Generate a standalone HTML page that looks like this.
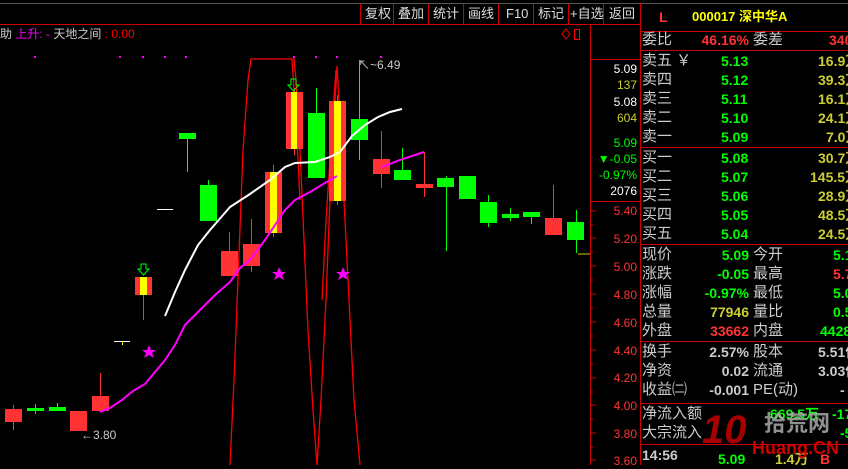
<!DOCTYPE html>
<html><head><meta charset="utf-8"><style>
body{margin:0;width:848px;height:465px;background:#000;overflow:hidden;font-family:"Liberation Sans","Noto Sans CJK SC",sans-serif;position:relative}
.t{position:absolute;white-space:nowrap;font-size:14px;line-height:16px}
.r{text-align:right}
</style></head><body>
<svg width="848" height="465" style="position:absolute;left:0;top:0" font-family="Liberation Sans, Noto Sans CJK SC, sans-serif">
<!-- frame lines -->
<line x1="0" y1="3.5" x2="848" y2="3.5" stroke="#555"/>
<line x1="0" y1="24.5" x2="640" y2="24.5" stroke="#c00"/>
<line x1="590.5" y1="24" x2="590.5" y2="465" stroke="#c00"/>
<line x1="640.5" y1="3" x2="640.5" y2="465" stroke="#c00"/>
<line x1="590" y1="59.5" x2="640" y2="59.5" stroke="#c00"/>
<line x1="590" y1="201.5" x2="640" y2="201.5" stroke="#c00"/>
<g stroke="#c00">
<line x1="360.5" y1="4" x2="360.5" y2="24"/><line x1="393.5" y1="4" x2="393.5" y2="24"/><line x1="428.5" y1="4" x2="428.5" y2="24"/><line x1="463.5" y1="4" x2="463.5" y2="24"/><line x1="498.5" y1="4" x2="498.5" y2="24"/><line x1="533.5" y1="4" x2="533.5" y2="24"/><line x1="568.5" y1="4" x2="568.5" y2="24"/><line x1="603.5" y1="4" x2="603.5" y2="24"/>
</g>
<g stroke="#c00">
<line x1="641" y1="31.5" x2="848" y2="31.5"/><line x1="641" y1="50.5" x2="848" y2="50.5"/><line x1="641" y1="147.5" x2="848" y2="147.5"/><line x1="641" y1="244.5" x2="848" y2="244.5"/><line x1="641" y1="341.5" x2="848" y2="341.5"/><line x1="641" y1="403.5" x2="848" y2="403.5"/><line x1="641" y1="444.5" x2="848" y2="444.5"/>
</g>
<!-- axis ticks -->
<g stroke="#c00">
<line x1="590" y1="211" x2="596" y2="211"/><line x1="590" y1="238" x2="596" y2="238"/><line x1="590" y1="266" x2="596" y2="266"/><line x1="590" y1="294" x2="596" y2="294"/><line x1="590" y1="322" x2="596" y2="322"/><line x1="590" y1="350" x2="596" y2="350"/><line x1="590" y1="378" x2="596" y2="378"/><line x1="590" y1="405" x2="596" y2="405"/><line x1="590" y1="433" x2="596" y2="433"/><line x1="590" y1="460" x2="596" y2="460"/>
<line x1="590" y1="225" x2="593" y2="225"/><line x1="590" y1="252" x2="593" y2="252"/><line x1="590" y1="280" x2="593" y2="280"/><line x1="590" y1="308" x2="593" y2="308"/><line x1="590" y1="336" x2="593" y2="336"/><line x1="590" y1="364" x2="593" y2="364"/><line x1="590" y1="392" x2="593" y2="392"/><line x1="590" y1="419" x2="593" y2="419"/><line x1="590" y1="447" x2="593" y2="447"/>
</g>
<line x1="578" y1="254" x2="590" y2="254" stroke="#cc0"/>
<!-- red envelopes -->
<g fill="none" stroke="#f00" stroke-width="1.3">
<polyline points="230,465 234,380 238,280 243,150 248,80 251,59 294,59 296,80 300,150 304,240 308,330 313,410 317,465"/>
<polyline points="292,59 296,120 300,200"/>
<polyline points="317,465 321,400 326,300 330,200 334,120 337,66 340,120 344,200 349,300 354,400 360,465"/>
<polyline points="322,300 326,220 330,160 333,110 336,70"/>
</g>
<!-- magenta dots -->
<g fill="#f0f"><rect x="34" y="56" width="2" height="2"/><rect x="119" y="56" width="2" height="2"/><rect x="142" y="56" width="2" height="2"/><rect x="164" y="56" width="2" height="2"/><rect x="185" y="56" width="2" height="2"/><rect x="293" y="56" width="2" height="2"/><rect x="315" y="56" width="2" height="2"/><rect x="336" y="56" width="2" height="2"/><rect x="380" y="56" width="2" height="2"/></g>
<!-- wicks -->
<g stroke-width="1">
<g stroke="#f33"><line x1="13.5" y1="405" x2="13.5" y2="430"/><line x1="100.5" y1="373" x2="100.5" y2="411"/><line x1="143.5" y1="277" x2="143.5" y2="320"/><line x1="229.5" y1="232" x2="229.5" y2="276"/><line x1="251.5" y1="219" x2="251.5" y2="272"/><line x1="273.5" y1="165" x2="273.5" y2="237"/><line x1="294.5" y1="88" x2="294.5" y2="155"/><line x1="337.5" y1="95" x2="337.5" y2="205"/><line x1="381.5" y1="131" x2="381.5" y2="188"/><line x1="424.5" y1="180" x2="424.5" y2="197"/><line x1="553.5" y1="185" x2="553.5" y2="235"/></g>
<g stroke="#0f0"><line x1="35.5" y1="404" x2="35.5" y2="414"/><line x1="57.5" y1="403" x2="57.5" y2="411"/><line x1="187.5" y1="133" x2="187.5" y2="172"/><line x1="208.5" y1="180" x2="208.5" y2="221"/><line x1="316.5" y1="88" x2="316.5" y2="178"/><line x1="359.5" y1="60" x2="359.5" y2="160"/><line x1="402.5" y1="148" x2="402.5" y2="180"/><line x1="446.5" y1="176" x2="446.5" y2="251"/><line x1="488.5" y1="195" x2="488.5" y2="227"/><line x1="510.5" y1="208" x2="510.5" y2="221"/><line x1="531.5" y1="212" x2="531.5" y2="224"/><line x1="576.5" y1="210" x2="576.5" y2="253"/></g>
</g>
<!-- bodies -->
<g fill="#f33">
<rect x="5" y="409" width="17" height="13"/><rect x="70" y="411" width="17" height="20"/><rect x="92" y="396" width="17" height="15"/><rect x="135" y="277" width="17" height="18"/><rect x="221" y="251" width="17" height="25"/><rect x="243" y="244" width="17" height="22"/><rect x="265" y="172" width="17" height="61"/><rect x="286" y="92" width="17" height="57"/><rect x="329" y="101" width="17" height="100"/><rect x="373" y="159" width="17" height="15"/><rect x="416" y="184" width="17" height="4"/><rect x="545" y="218" width="17" height="17"/>
</g>
<g fill="#ff0"><rect x="140" y="277" width="7" height="18"/><rect x="270" y="172" width="7" height="61"/><rect x="291" y="92" width="6" height="57"/><rect x="334" y="101" width="7" height="100"/></g>
<g fill="#0f0">
<rect x="27" y="408" width="17" height="3"/><rect x="49" y="407" width="17" height="4"/><rect x="179" y="133" width="17" height="6"/><rect x="200" y="185" width="17" height="36"/><rect x="308" y="113" width="17" height="65"/><rect x="351" y="119" width="17" height="21"/><rect x="394" y="170" width="17" height="10"/><rect x="437" y="178" width="17" height="9"/><rect x="459" y="176" width="17" height="23"/><rect x="480" y="202" width="17" height="21"/><rect x="502" y="214" width="17" height="4"/><rect x="523" y="212" width="17" height="5"/><rect x="567" y="222" width="17" height="18"/>
</g>
<line x1="114" y1="341.5" x2="130" y2="341.5" stroke="#fff"/><line x1="122.5" y1="341" x2="122.5" y2="345" stroke="#ff0"/>
<line x1="157" y1="209.5" x2="173" y2="209.5" stroke="#fff"/>
<!-- MAs -->
<polyline fill="none" stroke="#fff" stroke-width="2" points="165,316 175,292 185,270 198,245 210,230 230,207 250,194 270,180 285,167 295,163 315,162 330,157 340,152 352,136 365,125 378,117 390,112 402,109"/>
<polyline fill="none" stroke="#f0f" stroke-width="2" points="100,412 110,408 122,400 133,391 145,384 155,372 165,360 175,345 185,325 200,310 215,295 230,282 240,268 250,260 265,240 285,210 295,200 310,192 325,183 337,176"/>
<polyline fill="none" stroke="#f0f" stroke-width="2" points="382,167 400,160 412,156 424,152"/>
<line x1="424.5" y1="152" x2="424.5" y2="197" stroke="#f33"/>
<!-- stars -->
<g fill="#f0f"><polygon points="149,345 151,350 156,350 152,353 154,358 149,355 144,358 146,353 142,350 147,350"/><polygon points="279,267 281,272 286,272 282,275 284,280 279,277 274,280 276,275 272,272 277,272"/><polygon points="343,267 345,272 350,272 346,275 348,280 343,277 338,280 340,275 336,272 341,272"/></g>
<!-- arrows -->
<g fill="none" stroke="#0f0"><polygon points="141,264 146,264 146,269 149,269 143.5,275 138,269 141,269"/><polygon points="291,79 296,79 296,85 299,85 293.5,91 288,85 291,85"/></g>
<text x="81" y="439" fill="#ccc" font-size="12">←3.80</text>
<text x="358" y="69" fill="#ccc" font-size="12">↖~6.49</text>
<!-- diamond and square -->
<polygon points="566,29 570,34 566,39 562,34" fill="none" stroke="#f00"/>
<rect x="574.5" y="29.5" width="5" height="10" fill="none" stroke="#f00"/>
</svg>
<!-- toolbar -->
<div class="t" style="top:6px;left:365px;color:#ddd;font-size:13px">复权</div>
<div class="t" style="top:6px;left:398px;color:#ddd;font-size:13px">叠加</div>
<div class="t" style="top:6px;left:433px;color:#ddd;font-size:13px">统计</div>
<div class="t" style="top:6px;left:468px;color:#ddd;font-size:13px">画线</div>
<div class="t" style="top:6px;left:506px;color:#ddd;font-size:13px">F10</div>
<div class="t" style="top:6px;left:538px;color:#ddd;font-size:13px">标记</div>
<div class="t" style="top:6px;left:570px;color:#ddd;font-size:13px">+自选</div>
<div class="t" style="top:6px;left:609px;color:#ddd;font-size:13px">返回</div>
<div class="t" style="top:26px;left:0;font-size:12px;color:#ccc">助 <span style="color:#f0f">上升</span><span style="color:#f0f">: -</span> 天地之间 <span style="color:#f00">: 0.00</span></div>
<!-- axis labels -->
<div style="position:absolute;left:592px;width:45px;top:0;font-size:12px;line-height:14px;text-align:right">
<div class="t r" style="top:61px;right:0;color:#fff;font-size:12px">5.09</div>
<div class="t r" style="top:77px;right:0;color:#cc3;font-size:12px">137</div>
<div class="t r" style="top:94px;right:0;color:#fff;font-size:12px">5.08</div>
<div class="t r" style="top:110px;right:0;color:#cc3;font-size:12px">604</div>
<div class="t r" style="top:135px;right:0;color:#0f0;font-size:12px">5.09</div>
<div class="t r" style="top:151px;right:0;color:#0f0;font-size:12px">▼-0.05</div>
<div class="t r" style="top:167px;right:0;color:#0f0;font-size:12px">-0.97%</div>
<div class="t r" style="top:183px;right:0;color:#fff;font-size:12px">2076</div>
<div class="t r" style="top:203px;right:0;color:#f33;font-size:12px">5.40</div>
<div class="t r" style="top:231px;right:0;color:#f33;font-size:12px">5.20</div>
<div class="t r" style="top:259px;right:0;color:#f33;font-size:12px">5.00</div>
<div class="t r" style="top:287px;right:0;color:#f33;font-size:12px">4.80</div>
<div class="t r" style="top:315px;right:0;color:#f33;font-size:12px">4.60</div>
<div class="t r" style="top:343px;right:0;color:#f33;font-size:12px">4.40</div>
<div class="t r" style="top:370px;right:0;color:#f33;font-size:12px">4.20</div>
<div class="t r" style="top:398px;right:0;color:#f33;font-size:12px">4.00</div>
<div class="t r" style="top:426px;right:0;color:#f33;font-size:12px">3.80</div>
<div class="t r" style="top:453px;right:0;color:#f33;font-size:12px">3.60</div>
</div>
<!-- right panel -->
<div class="t" style="top:9px;left:659px;color:#f33;font-weight:bold">L</div>
<div class="t" style="top:9px;left:692px;color:#ff0;font-weight:bold;font-size:13px">000017 深中华A</div>
<div class="t" style="top:32px;left:642px;color:#ccc;font-size:15px">委比</div>
<div class="t r" style="top:32px;right:99px;color:#f33;font-weight:bold">46.16%</div>
<div class="t" style="top:32px;left:753px;color:#ccc;font-size:15px">委差</div>
<div class="t" style="top:32px;left:829px;color:#f33;font-weight:bold">340</div>
<div id="ob"></div>
<div style="position:absolute;left:0;top:0;color:#ccc">
<div class="t" style="top:53px;left:642px;color:#ccc;font-size:15px">卖五 ￥</div>
<div class="t" style="top:72px;left:642px;color:#ccc;font-size:15px">卖四</div>
<div class="t" style="top:91px;left:642px;color:#ccc;font-size:15px">卖三</div>
<div class="t" style="top:110px;left:642px;color:#ccc;font-size:15px">卖二</div>
<div class="t" style="top:129px;left:642px;color:#ccc;font-size:15px">卖一</div>
<div class="t" style="top:150px;left:642px;color:#ccc;font-size:15px">买一</div>
<div class="t" style="top:169px;left:642px;color:#ccc;font-size:15px">买二</div>
<div class="t" style="top:188px;left:642px;color:#ccc;font-size:15px">买三</div>
<div class="t" style="top:207px;left:642px;color:#ccc;font-size:15px">买四</div>
<div class="t" style="top:226px;left:642px;color:#ccc;font-size:15px">买五</div>
</div>
<div class="t" style="top:53px;left:721px;color:#0f0;font-weight:bold">5.13</div>
<div class="t" style="top:72px;left:721px;color:#0f0;font-weight:bold">5.12</div>
<div class="t" style="top:91px;left:721px;color:#0f0;font-weight:bold">5.11</div>
<div class="t" style="top:110px;left:721px;color:#0f0;font-weight:bold">5.10</div>
<div class="t" style="top:129px;left:721px;color:#0f0;font-weight:bold">5.09</div>
<div class="t" style="top:150px;left:721px;color:#0f0;font-weight:bold">5.08</div>
<div class="t" style="top:169px;left:721px;color:#0f0;font-weight:bold">5.07</div>
<div class="t" style="top:188px;left:721px;color:#0f0;font-weight:bold">5.06</div>
<div class="t" style="top:207px;left:721px;color:#0f0;font-weight:bold">5.05</div>
<div class="t" style="top:226px;left:721px;color:#0f0;font-weight:bold">5.04</div>
<div class="t" style="top:53px;left:818px;color:#cc3;font-weight:bold">16.9万</div>
<div class="t" style="top:72px;left:818px;color:#cc3;font-weight:bold">39.3万</div>
<div class="t" style="top:91px;left:818px;color:#cc3;font-weight:bold">16.1万</div>
<div class="t" style="top:110px;left:818px;color:#cc3;font-weight:bold">24.1万</div>
<div class="t" style="top:129px;left:826px;color:#cc3;font-weight:bold">7.0万</div>
<div class="t" style="top:150px;left:818px;color:#cc3;font-weight:bold">30.7万</div>
<div class="t" style="top:169px;left:810px;color:#cc3;font-weight:bold">145.5万</div>
<div class="t" style="top:188px;left:818px;color:#cc3;font-weight:bold">28.9万</div>
<div class="t" style="top:207px;left:818px;color:#cc3;font-weight:bold">48.5万</div>
<div class="t" style="top:226px;left:818px;color:#cc3;font-weight:bold">24.5万</div>
<!-- quote block -->
<div class="t" style="top:247px;left:642px;color:#ccc;font-size:15px">现价</div>
<div class="t" style="top:266px;left:642px;color:#ccc;font-size:15px">涨跌</div>
<div class="t" style="top:285px;left:642px;color:#ccc;font-size:15px">涨幅</div>
<div class="t" style="top:304px;left:642px;color:#ccc;font-size:15px">总量</div>
<div class="t" style="top:323px;left:642px;color:#ccc;font-size:15px">外盘</div>
<div class="t r" style="top:247px;right:99px;color:#0f0;font-weight:bold">5.09</div>
<div class="t r" style="top:266px;right:99px;color:#0f0;font-weight:bold">-0.05</div>
<div class="t r" style="top:285px;right:99px;color:#0f0;font-weight:bold">-0.97%</div>
<div class="t r" style="top:304px;right:99px;color:#cc3;font-weight:bold">77946</div>
<div class="t r" style="top:323px;right:99px;color:#f33;font-weight:bold">33662</div>
<div class="t" style="top:247px;left:753px;color:#ccc;font-size:15px">今开</div>
<div class="t" style="top:266px;left:753px;color:#ccc;font-size:15px">最高</div>
<div class="t" style="top:285px;left:753px;color:#ccc;font-size:15px">最低</div>
<div class="t" style="top:304px;left:753px;color:#ccc;font-size:15px">量比</div>
<div class="t" style="top:323px;left:753px;color:#ccc;font-size:15px">内盘</div>
<div class="t" style="top:247px;left:833px;color:#0f0;font-weight:bold">5.1</div>
<div class="t" style="top:266px;left:833px;color:#f33;font-weight:bold">5.7</div>
<div class="t" style="top:285px;left:833px;color:#0f0;font-weight:bold">5.0</div>
<div class="t" style="top:304px;left:833px;color:#0f0;font-weight:bold">0.5</div>
<div class="t" style="top:323px;left:820px;color:#0f0;font-weight:bold">4428</div>
<div class="t" style="top:344px;left:642px;color:#ccc;font-size:15px">换手</div>
<div class="t" style="top:363px;left:642px;color:#ccc;font-size:15px">净资</div>
<div class="t" style="top:382px;left:642px;color:#ccc;font-size:15px">收益㈡</div>
<div class="t r" style="top:344px;right:99px;color:#ccc;font-weight:bold">2.57%</div>
<div class="t r" style="top:363px;right:99px;color:#ccc;font-weight:bold">0.02</div>
<div class="t r" style="top:382px;right:99px;color:#ccc;font-weight:bold">-0.001</div>
<div class="t" style="top:344px;left:753px;color:#ccc;font-size:15px">股本</div>
<div class="t" style="top:363px;left:753px;color:#ccc;font-size:15px">流通</div>
<div class="t" style="top:382px;left:753px;color:#ccc;font-size:15px">PE(动)</div>
<div class="t" style="top:344px;left:818px;color:#ccc;font-weight:bold">5.51亿</div>
<div class="t" style="top:363px;left:818px;color:#ccc;font-weight:bold">3.03亿</div>
<div class="t" style="top:382px;left:840px;color:#ccc;font-weight:bold">-</div>
<div class="t" style="top:406px;left:642px;color:#ccc;font-size:15px">净流入额</div>
<div class="t" style="top:425px;left:642px;color:#ccc;font-size:15px">大宗流入</div>
<div class="t" style="top:406px;left:770px;color:#0f0;font-weight:bold">669.5万</div>
<div class="t" style="top:406px;left:832px;color:#0f0;font-weight:bold">-17</div>
<div class="t" style="top:425px;left:840px;color:#0f0;font-weight:bold">-5</div>
<div class="t" style="top:447px;left:642px;color:#ccc;font-weight:bold">14:56</div>
<div class="t" style="top:451px;left:718px;color:#0f0;font-weight:bold">5.09</div>
<div class="t" style="top:451px;left:775px;color:#cc3;font-weight:bold">1.4万</div>
<div class="t" style="top:451px;left:820px;color:#f33;font-weight:bold">B</div>
<!-- watermark -->
<div class="t" style="top:410px;left:702px;font-size:40px;line-height:40px;color:#b00;font-weight:bold;font-style:italic;opacity:.9">10</div>
<div class="t" style="top:412px;left:764px;font-size:22px;line-height:24px;color:#aaa;font-weight:bold;opacity:.85">拾荒网</div>
<div class="t" style="top:438px;left:752px;font-size:18px;line-height:20px;color:#c00;font-weight:bold">Huang.CN</div>
</body></html>
